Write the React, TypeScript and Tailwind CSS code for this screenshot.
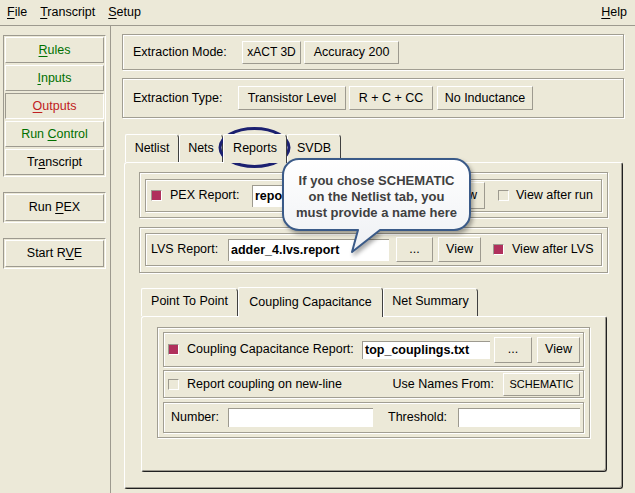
import React from "react";

const raised = "border border-t-white border-l-white border-r-[#9d9a8f] border-b-[#9d9a8f]";
const sunken = "border border-t-[#9d9a8f] border-l-[#9d9a8f] border-r-white border-b-white";
const etched = "border border-[#a19e92] shadow-[inset_1px_1px_0_#fff,1px_1px_0_#fff]";

function Btn({ className = "", children }: { className?: string; children?: React.ReactNode }) {
  return (
    <div className={`flex items-center justify-center shrink-0 whitespace-nowrap ${raised} ${className}`}>
      {children}
    </div>
  );
}

function Field({ className = "", value = "" }: { className?: string; value?: string }) {
  return (
    <div
      className={`bg-white border-t border-l border-[#9d9a8f] flex items-center pl-[2px] font-bold text-black overflow-hidden whitespace-nowrap shrink-0 ${className}`}
    >
      {value}
    </div>
  );
}

function Check({ on = false }: { on?: boolean }) {
  return (
    <div className={`w-[11px] h-[11px] shrink-0 ${sunken} ${on ? "bg-[#b0305c]" : "bg-[#ece9d8]"}`} />
  );
}

function SideBtn({ children, pressed = false, className = "" }: { children: React.ReactNode; pressed?: boolean; className?: string }) {
  return (
    <div className={`h-[26px] flex items-center justify-center ${pressed ? sunken : raised} ${className}`}>
      {children}
    </div>
  );
}

function Tab({ className = "", children, selected = false }: { className?: string; children: React.ReactNode; selected?: boolean }) {
  return (
    <div
      className={`flex items-center justify-center shrink-0 border-t border-l border-r border-t-white border-l-white border-r-[#404040] rounded-tl-[2px] rounded-tr-[4px] ${
        selected ? "relative z-10 -mb-px bg-[#ece9d8]" : ""
      } ${className}`}
    >
      {children}
    </div>
  );
}

export default function App() {
  return (
    <div className="relative w-[635px] h-[493px] overflow-hidden bg-[#ece9d8] text-[12.5px] text-black font-['Liberation_Sans',Arial,sans-serif] leading-none">
      {/* menu bar */}
      <div className="h-[26px] border-b border-[#9d9a8f] flex items-center pl-[7px] pr-[8px]">
        <span><u className="underline-offset-2">F</u>ile</span>
        <span className="ml-[13px]"><u className="underline-offset-2">T</u>ranscript</span>
        <span className="ml-[13px]"><u className="underline-offset-2">S</u>etup</span>
        <span className="ml-auto"><u className="underline-offset-2">H</u>elp</span>
      </div>

      <div className="flex h-[467px]">
        {/* left side */}
        <div className="w-[111px] shrink-0 border-r border-[#9d9a8f] pt-[9px] pl-[3px]">
          <div className={`w-[103px] p-px flex flex-col gap-[2px] ${sunken}`}>
            <SideBtn className="text-[#007000]"><span><u className="underline-offset-2">R</u>ules</span></SideBtn>
            <SideBtn className="text-[#007000]"><span><u className="underline-offset-2">I</u>nputs</span></SideBtn>
            <SideBtn pressed className="text-[#c02020]"><span><u className="underline-offset-2">O</u>utputs</span></SideBtn>
            <SideBtn className="text-[#007000]"><span>Run <u className="underline-offset-2">C</u>ontrol</span></SideBtn>
            <SideBtn><span>Tr<u className="underline-offset-2">a</u>nscript</span></SideBtn>
          </div>
          <div className={`mt-[15px] w-[103px] p-px ${sunken}`}>
            <SideBtn className="h-[27px]"><span>Run <u className="underline-offset-2">P</u>EX</span></SideBtn>
          </div>
          <div className={`mt-[15px] w-[103px] p-px ${sunken}`}>
            <SideBtn className="h-[27px]"><span>Start R<u className="underline-offset-2">V</u>E</span></SideBtn>
          </div>
        </div>

        {/* main */}
        <div className="flex-1 flex flex-col pt-[8px]">
          <div className={`ml-[11px] mr-[11px] h-[36px] flex items-center pl-[10px] ${etched}`}>
            <span className="w-[109px] shrink-0">Extraction Mode:</span>
            <Btn className="w-[59px] h-[23px] text-[12px]">xACT 3D</Btn>
            <Btn className="ml-[3px] w-[95px] h-[23px]">Accuracy 200</Btn>
          </div>
          <div className={`mt-[8px] ml-[11px] mr-[11px] h-[40px] flex items-center pl-[10px] ${etched}`}>
            <span className="w-[105px] shrink-0">Extraction Type:</span>
            <Btn className="w-[108px] h-[24px]">Transistor Level</Btn>
            <Btn className="ml-[3px] w-[84px] h-[24px]">R + C + CC</Btn>
            <Btn className="ml-[4px] w-[96px] h-[24px]">No Inductance</Btn>
          </div>

          {/* tabs */}
          <div className="mt-[16px] ml-[13px] mr-[12px] flex flex-col">
            <div className="flex h-[28px] pl-px">
              <Tab className="w-[54px] pb-px">Netlist</Tab>
              <Tab className="w-[44px] pb-px">Nets</Tab>
              <Tab selected className="w-[64px] pb-px">Reports</Tab>
              <Tab className="w-[54px] pb-px">SVDB</Tab>
            </div>
            <div className="h-[327px] border border-t-white border-l-white border-r-[#202020] border-b-[#202020] rounded-[3px] shadow-[inset_-1px_-1px_0_#9d9a8f] px-[14px] pt-[9px] flex flex-col">
              {/* PEX report */}
              <div className={`px-[5px] pt-[6px] pb-[5px] ${etched}`}>
                <div className={`h-[33px] flex items-center pl-[5px] ${etched}`}>
                  <Check on />
                  <span className="ml-[8px] w-[82px] shrink-0">PEX Report:</span>
                  <Field className="w-[140px] h-[22px]" value="report" />
                  <Btn className="ml-[8px] w-[37px] h-[26px]" />
                  <Btn className="ml-[5px] w-[43px] h-[27px]">View</Btn>
                  <div className="ml-[13px]"><Check /></div>
                  <span className="ml-[7px]">View after run</span>
                </div>
              </div>
              {/* LVS report */}
              <div className={`mt-[9px] px-[5px] pt-[5px] pb-[6px] ${etched}`}>
                <div className={`h-[33px] flex items-center pl-[5px] ${etched}`}>
                  <span className="w-[77px] shrink-0">LVS Report:</span>
                  <Field className="w-[161px] h-[22px]" value="adder_4.lvs.report" />
                  <Btn className="ml-[7px] w-[37px] h-[25px]">...</Btn>
                  <Btn className="ml-[5px] w-[43px] h-[25px]">View</Btn>
                  <div className="ml-[12px]"><Check on /></div>
                  <span className="ml-[8px]">View after LVS</span>
                </div>
              </div>

              {/* sub tabs */}
              <div className="mt-[13px] ml-[2px] mr-[1px] flex flex-col">
                <div className="flex items-end h-[30px]">
                  <Tab className="w-[97px] h-[28px] pb-[3px]">Point To Point</Tab>
                  <Tab selected className="w-[145px] h-[30px] pb-[1px]">Coupling Capacitance</Tab>
                  <Tab className="w-[95px] h-[28px] pb-[3px]">Net Summary</Tab>
                </div>
                <div className="h-[156px] border border-t-white border-l-white border-r-[#202020] border-b-[#202020] rounded-[3px] shadow-[inset_-1px_-1px_0_#9d9a8f] pl-[15px] pr-[16px] pt-[10px]">
                  <div className={`h-[111px] px-[5px] pt-[4px] flex flex-col ${etched}`}>
                    <div className={`h-[35px] flex items-center pl-[4px] ${etched}`}>
                      <Check on />
                      <span className="ml-[8px] w-[175px] shrink-0">Coupling Capacitance Report:</span>
                      <Field className="w-[128px] h-[18px]" value="top_couplings.txt" />
                      <Btn className="ml-[4px] w-[38px] h-[26px]">...</Btn>
                      <Btn className="ml-[5px] w-[43px] h-[26px]">View</Btn>
                    </div>
                    <div className={`mt-[3px] h-[28px] flex items-center pl-[4px] pr-[3px] ${etched}`}>
                      <Check />
                      <span className="ml-[8px]">Report coupling on new-line</span>
                      <span className="ml-auto">Use Names From:</span>
                      <Btn className="ml-[9px] w-[77px] h-[23px] text-[11px]">SCHEMATIC</Btn>
                    </div>
                    <div className={`mt-[4px] h-[31px] flex items-center pl-[7px] ${etched}`}>
                      <span className="w-[57px] shrink-0">Number:</span>
                      <Field className="w-[145px] h-[19px]" />
                      <span className="ml-[15px] w-[70px] shrink-0">Threshold:</span>
                      <Field className="w-[122px] h-[19px]" />
                    </div>
                  </div>
                </div>
              </div>
            </div>
          </div>
        </div>
      </div>

      {/* circle around the Reports tab */}
      <svg className="absolute left-[217px] top-[126px]" width="76" height="44" viewBox="0 0 76 44">
        <ellipse cx="37.5" cy="21.5" rx="34.5" ry="19" fill="none" stroke="#1b2070" strokeWidth="3" />
      </svg>

      {/* callout */}
      <svg
        className="absolute left-[278px] top-[154px] drop-shadow-[2px_3px_2px_rgba(0,0,0,0.35)]"
        width="200"
        height="104"
        viewBox="0 0 200 104"
      >
        <defs>
          <linearGradient id="bub" x1="0" y1="0" x2="0" y2="1">
            <stop offset="0" stopColor="#ffffff" />
            <stop offset="1" stopColor="#eef0f4" />
          </linearGradient>
        </defs>
        <path
          d="M21 5 H176 A16 16 0 0 1 192 21 V60 A16 16 0 0 1 176 76 H102 L74 98 L80 76 H21 A16 16 0 0 1 5 60 V21 A16 16 0 0 1 21 5 Z"
          fill="url(#bub)"
          stroke="#3a5a88"
          strokeWidth="2"
          strokeLinejoin="round"
        />
      </svg>
      <div className="absolute left-[283px] top-[173px] w-[187px] text-center font-bold text-[13px] leading-[16px] text-[#404040]">
        If you chose SCHEMATIC
        <br />
        on the Netlist tab, you
        <br />
        must provide a name here
      </div>
    </div>
  );
}
